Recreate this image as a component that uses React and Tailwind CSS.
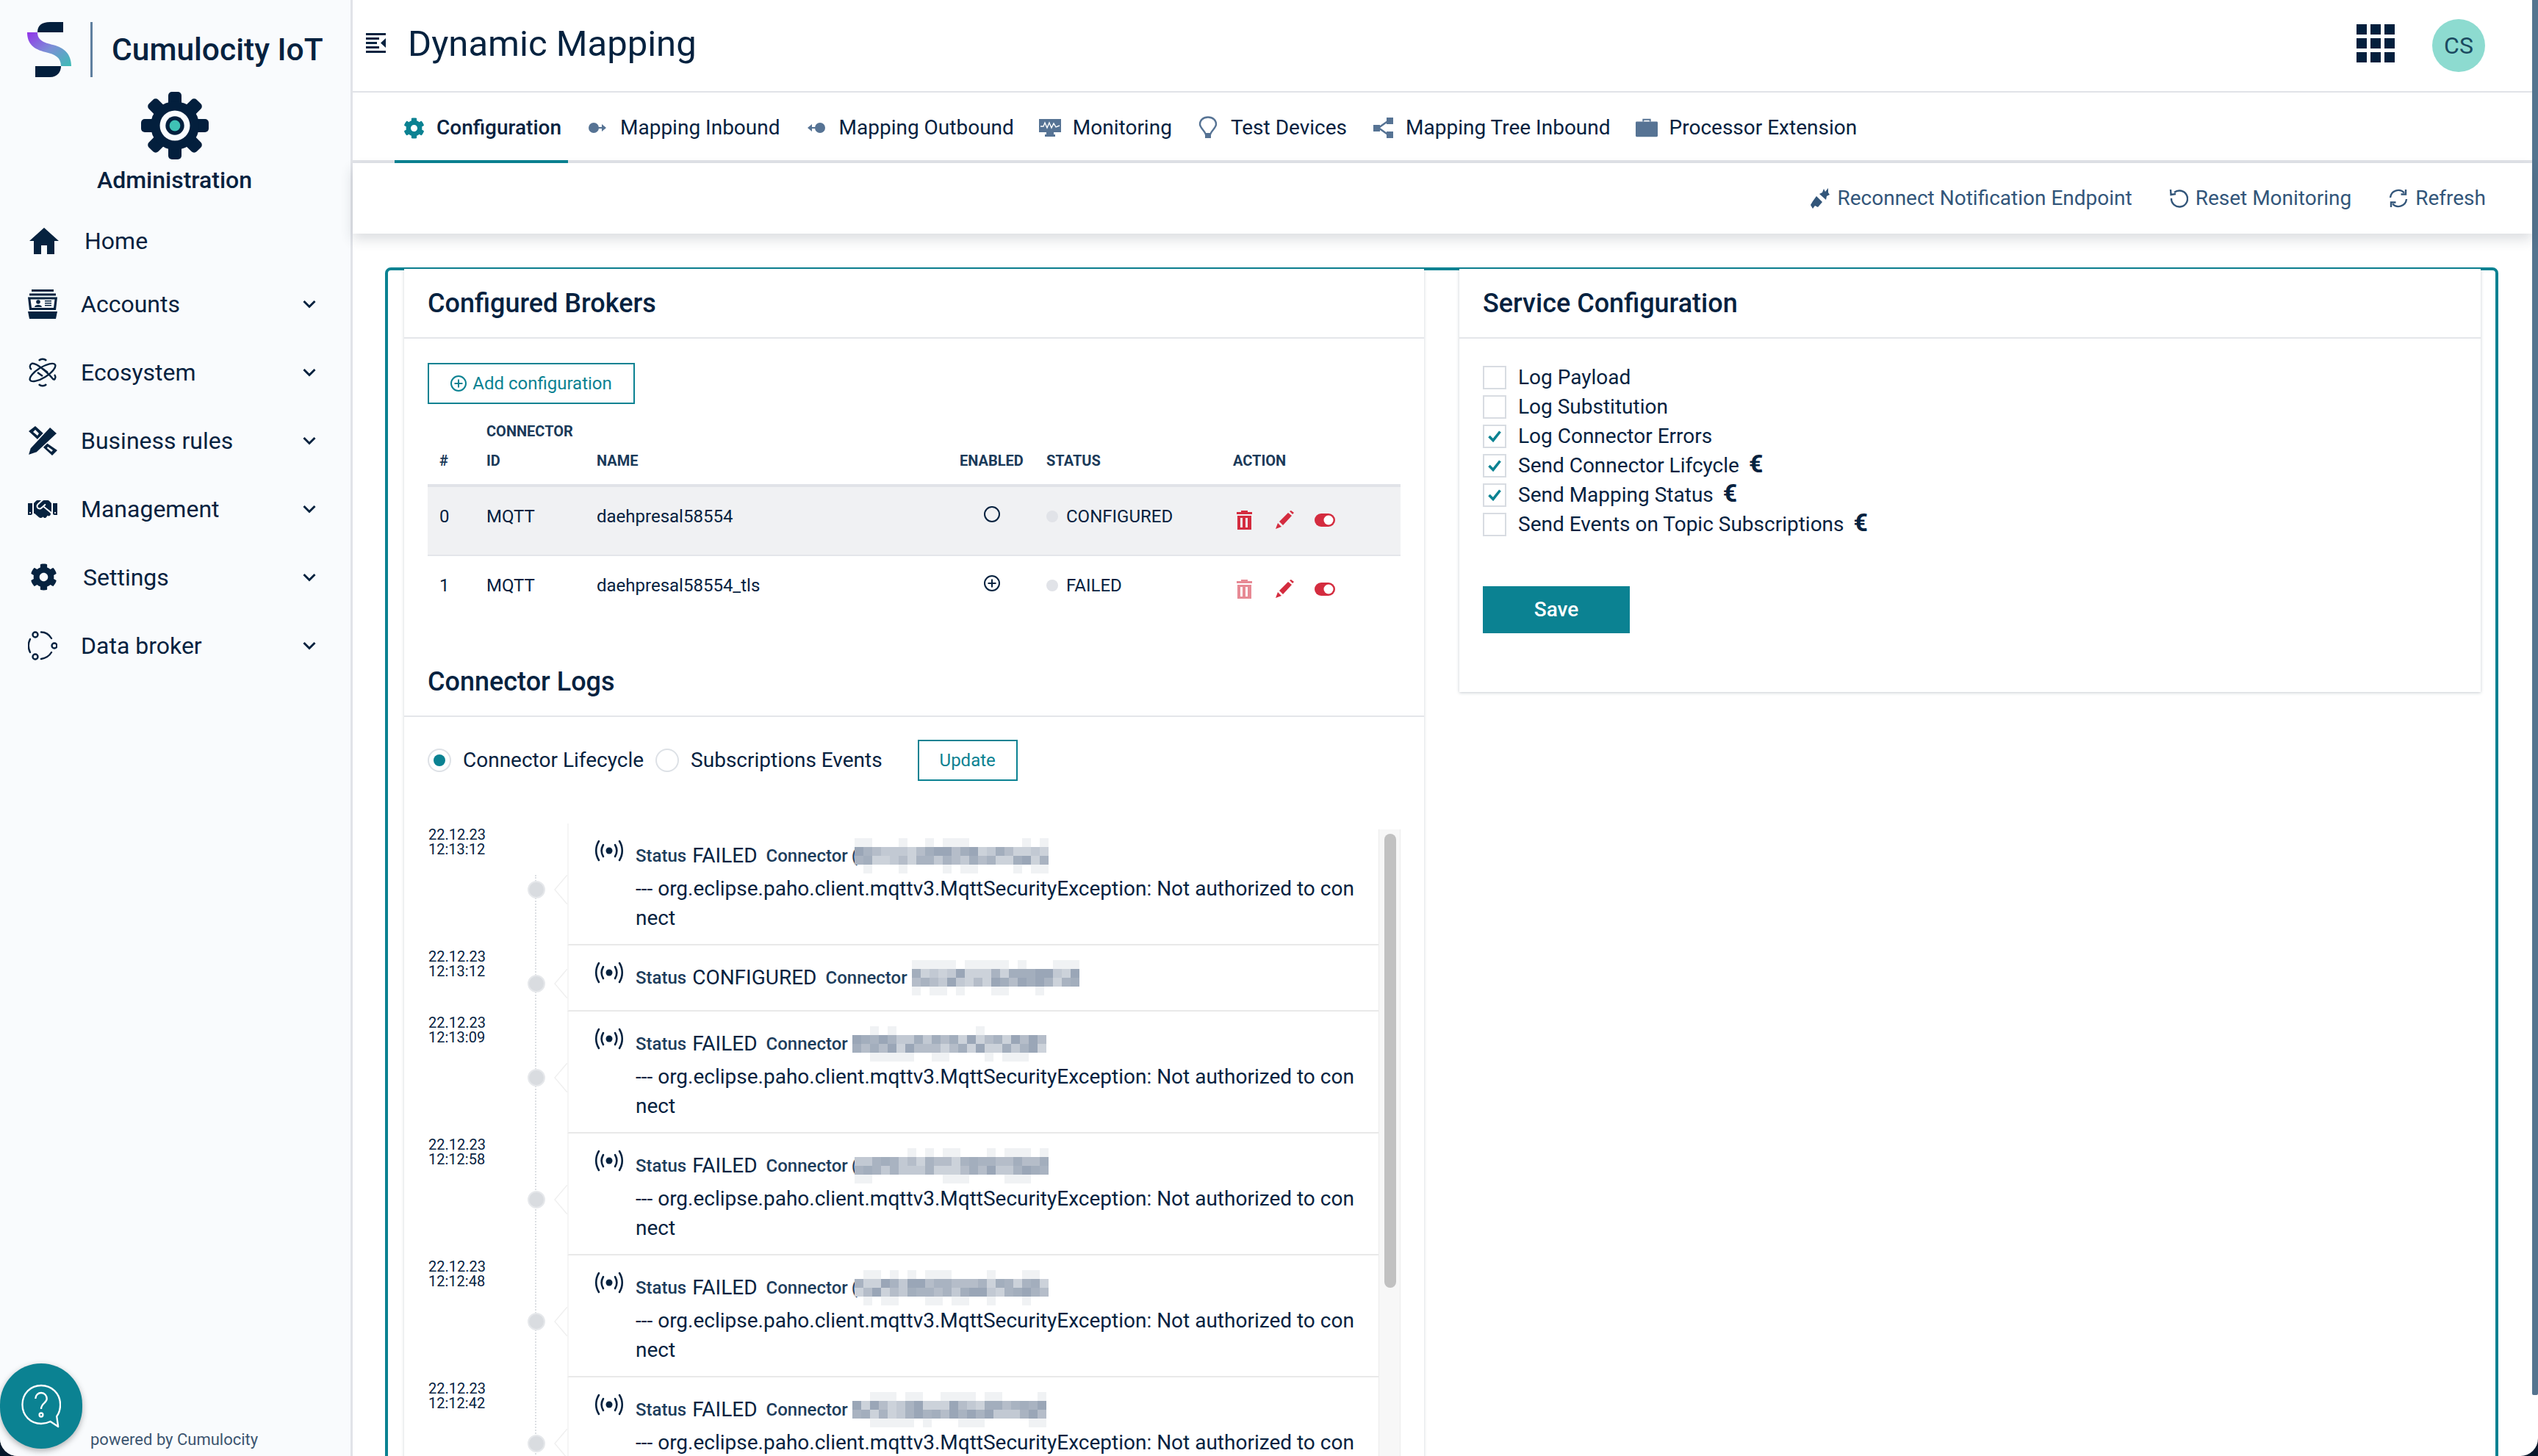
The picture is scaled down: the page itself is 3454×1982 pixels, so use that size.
import React from "react";
import { FaCog, FaHandshake } from "react-icons/fa";

const NAVY = "#06223f";
const TEAL = "#0b8292";
const ICON = "#567394";
const RED = "#d42c3f";

function Logo() {
  return (
    <svg width="60" height="75" viewBox="37 30 60 75" className="flex-none">
      <defs>
        <linearGradient id="sg" x1="0" y1="0" x2="1" y2="1">
          <stop offset="0" stopColor="#9333ea" />
          <stop offset="0.5" stopColor="#7c8fd6" />
          <stop offset="1" stopColor="#3dbdb5" />
        </linearGradient>
      </defs>
      <path d="M86 30H68Q51 30 51 44H86Z" fill="#031f3d" />
      <path d="M37 44H51C51 55 60 58 72 61C88 65 97 74 97 90H83C83 78 75 74 62 71C46 67 37 60 37 44Z" fill="url(#sg)" />
      <path d="M48 90H83C83 98 78 105 68 105H48Z" fill="#031f3d" />
    </svg>
  );
}

function BigGear() {
  const a = [0, 45, 90, 135, 180, 225, 270, 315];
  return (
    <svg width="92" height="92" viewBox="0 0 92 92">
      {a.map((r) => (
        <rect key={r} x="37" y="0" width="18" height="26" rx="5" fill="#031f3d" transform={`rotate(${r} 46 46)`} />
      ))}
      <circle cx="46" cy="46" r="33" fill="#031f3d" />
      <circle cx="46" cy="46" r="20.5" fill="#f9fbfd" />
      <circle cx="46" cy="46" r="12.7" fill="#031f3d" />
      <circle cx="46" cy="46" r="7.4" fill="#3fc1b5" />
    </svg>
  );
}

const HomeI = () => (
  <svg width="40" height="36" viewBox="0 0 40 36" fill={NAVY}><path d="M20 0L40 18H34V36H24V24H16V36H6V18H0Z" /></svg>
);
const AccountsI = () => (
  <svg width="40" height="40" viewBox="0 0 40 40" fill={NAVY}>
    <rect x="5" y="0" width="30" height="3" />
    <rect x="2" y="5.5" width="36" height="3" />
    <path fillRule="evenodd" d="M0 10.500H40L38 28H2ZM3.500 13.500L5 25H35L36.500 13.500Z" />
    <circle cx="14" cy="17" r="2.800" />
    <path d="M9 24C9 20 19 20 19 24Z" />
    <rect x="23" y="15" width="9" height="1.500" /><rect x="23" y="18" width="9" height="1.500" /><rect x="23" y="21" width="9" height="1.500" />
    <path d="M0 30H40L38 40H2Z" />
  </svg>
);
const EcoI = () => (
  <svg width="40" height="40" viewBox="0 0 40 40" fill="none" stroke={NAVY} strokeWidth="2.400">
    <ellipse cx="20" cy="20" rx="20" ry="7" transform="rotate(-32 20 20)" />
    <path d="M5 8C11 6 27 20 35 30M5 8C2 10 2 14 5 16M35 30C38 29 38 25 36 23" />
    <path d="M15 4C17 1 23 1 25 4M15 36C17 39 23 39 25 36" />
    <path d="M27 20L20 15M13 20L20 25" />
  </svg>
);
const RulesI = () => (
  <svg width="40" height="40" viewBox="0 0 40 40" fill={NAVY}>
    <path fillRule="evenodd" d="M10 0L21 10L13 18L1 7ZM10 5L7 8L13 13L15 10Z" />
    <path fillRule="evenodd" d="M24 22L40 33L33 40L21 29ZM27 28L26 30L32 35L34 33Z" />
    <path d="M0 40L3 30L30 1L40 10L12 36Z" stroke="#f9fbfd" strokeWidth="1.500" />
  </svg>
);
const BrokerI = () => (
  <svg width="40" height="40" viewBox="0 0 40 40" fill="none" stroke={NAVY} strokeWidth="2.400" strokeLinecap="round">
    <circle cx="10" cy="5" r="3.500" /><circle cx="36" cy="20" r="3.500" /><circle cx="10" cy="35" r="3.500" />
    <path d="M18 1.500C24 1.500 29 5 32 10M32 29C29 34 24 37 18 38M3 11C0 17 0 23 3 29" />
  </svg>
);
const Chevron = () => (
  <svg width="18" height="12" viewBox="0 0 18 12" fill="none" stroke={NAVY} strokeWidth="3"><path d="M1.500 2L9 9.500L16.500 2" /></svg>
);
const MenuI = () => (
  <svg width="27" height="27" viewBox="0 0 27 27" fill="#06223f">
    <rect x="0" y="0" width="27" height="3" /><rect x="0" y="6" width="18" height="3" /><rect x="0" y="12" width="15" height="3" /><rect x="0" y="18" width="18" height="3" /><rect x="0" y="24" width="27" height="3" />
    <path d="M27 7V20L20 13.500Z" />
  </svg>
);
const InI = () => (
  <svg width="24" height="16" viewBox="0 0 24 16" fill={ICON}><circle cx="7" cy="8" r="7" /><rect x="12" y="7" width="8" height="2" /><path d="M18 3L24 8L18 13Z" /></svg>
);
const OutI = () => (
  <svg width="24" height="16" viewBox="0 0 24 16" fill={ICON}><circle cx="17" cy="8" r="7" /><rect x="4" y="7" width="8" height="2" /><path d="M6 3L0 8L6 13Z" /></svg>
);
const MonI = () => (
  <svg width="30" height="24" viewBox="0 0 30 24" className="mb-[1px]">
    <rect x="0" y="0" width="30" height="18" fill={ICON} /><rect x="10" y="18" width="10" height="3" fill={ICON} /><rect x="8" y="21" width="14" height="3" fill={ICON} />
    <path d="M2 10L6 10L8 5L11 12L14 5L17 12L20 6L23 11L28 9" stroke="#fff" strokeWidth="1.400" fill="none" />
  </svg>
);
const BulbI = () => (
  <svg width="26" height="30" viewBox="0 0 26 30" className="mb-[2px]">
    <path d="M13 1.500C6 1.500 2 6 2 11C2 16 8 19 10 25H16C18 19 24 16 24 11C24 6 20 1.500 13 1.500Z" fill="none" stroke={ICON} strokeWidth="2.400" />
    <rect x="9" y="23" width="8" height="7" fill={ICON} />
  </svg>
);
const TreeI = () => (
  <svg width="27" height="28" viewBox="0 0 27 28" fill={ICON}>
    <rect x="0" y="10" width="9" height="9" /><rect x="18" y="0" width="9" height="9" /><rect x="18" y="19" width="9" height="9" />
    <path d="M7 14L21 4M7 14L21 24" stroke={ICON} strokeWidth="2.500" />
  </svg>
);
const CaseI = () => (
  <svg width="32" height="26" viewBox="0 0 32 26" fill={ICON}>
    <path d="M10 4V0H22V4H20V2H12V4Z" /><rect x="0" y="4" width="32" height="22" rx="1.500" />
  </svg>
);
const PlugI = () => (
  <svg width="26" height="28" viewBox="0 0 26 28" fill="#33567a">
    <path d="M0 23L3 18L8 11L16 19L10 26L6 24L3 28Z" />
    <path d="M12 8L16 6L18 1L20 5L24 0L24 6L26 9L22 11L21 16Z" />
  </svg>
);
const ResetI = () => (
  <svg width="26" height="26" viewBox="0 0 26 26" fill="none" stroke="#33567a" strokeWidth="2.400">
    <path d="M7 5A11 11 0 1 1 3 13" /><path d="M2 1L2.500 8L9 7" />
  </svg>
);
const RefreshI = () => (
  <svg width="28" height="26" viewBox="0 0 28 26" fill="none" stroke="#33567a" strokeWidth="2.400">
    <path d="M3 12A11 11 0 0 1 22 5.500" /><path d="M25 14A11 11 0 0 1 6 20.500" />
    <path d="M24 1V7.500H17.500M4 25V18.500H10.500" />
  </svg>
);
const Trash = ({ light }) => (
  <svg width="21" height="26" viewBox="0 0 21 26" fill={RED} opacity={light ? 0.55 : 1} fillRule="evenodd">
    <rect x="6" y="0" width="9" height="2" /><rect x="0" y="2" width="21" height="3" />
    <path d="M1 7H20V26H1ZM5 10V23H8V10ZM12 10V23H15V10Z" />
  </svg>
);
const Pencil = () => (
  <svg width="25" height="25" viewBox="0 0 25 25" fill={RED}>
    <path d="M5 15L17 3L22 7L10 20Z" /><path d="M3 17L8 22L0 25Z" /><path d="M19 1L21 0L25 3L23 5Z" />
  </svg>
);
const Toggle = () => (
  <svg width="28" height="18" viewBox="0 0 28 18"><rect width="28" height="18" rx="9" fill={RED} /><circle cx="19" cy="9" r="6.500" fill="#fff" /></svg>
);
const Signal = () => (
  <svg width="40" height="30" viewBox="0 0 40 30" fill="none" stroke={NAVY} strokeWidth="2.600" strokeLinecap="round" className="flex-none">
    <circle cx="20" cy="15" r="4.500" fill={NAVY} stroke="none" />
    <path d="M12 7C9 12 9 18 12 23M28 7C31 12 31 18 28 23" />
    <path d="M6 2C1 10 1 20 6 28M34 2C39 10 39 20 34 28" />
  </svg>
);

const menu = [
  { t: "Accounts", I: AccountsI },
  { t: "Ecosystem", I: EcoI },
  { t: "Business rules", I: RulesI },
  { t: "Management", I: () => <FaHandshake size={40} color={NAVY} /> },
  { t: "Settings", I: () => <span className="-mr-[3px] ml-[3px] flex"><FaCog size={37} color={NAVY} /></span> },
  { t: "Data broker", I: BrokerI },
];

const tabs = [
  { t: "Configuration", I: () => <FaCog size={29} color={TEAL} />, active: true },
  { t: "Mapping Inbound", I: InI },
  { t: "Mapping Outbound", I: OutI },
  { t: "Monitoring", I: MonI },
  { t: "Test Devices", I: BulbI },
  { t: "Mapping Tree Inbound", I: TreeI },
  { t: "Processor Extension", I: CaseI },
];

function Pixels({ width, seed }) {
  const cells = [];
  let s = seed;
  const rnd = () => { s = (s * 9301 + 49297) % 233280; return s / 233280; };
  const cols = Math.floor(width / 12);
  const tones = ["#9aa6b7", "#a9b3c1", "#b5bdc9", "#c2c9d3", "#ccd2da", "#a3aebd"];
  for (let r = 0; r < 4; r++) {
    for (let c = 0; c < cols; c++) {
      const core = r === 1 || r === 2;
      const fill = core ? tones[Math.floor(rnd() * tones.length)] : "#f0f2f4";
      const show = core || rnd() > 0.6;
      if (show) cells.push(<rect key={`${r}-${c}`} x={c * 12} y={r * 12} width="12" height="12" fill={fill} />);
    }
  }
  return <svg width={cols * 12} height="48" className="flex-none">{cells}</svg>;
}

const logs = [
  { d: "22.12.23", h: "12:13:12", s: "FAILED", paren: true, seed: 11 },
  { d: "22.12.23", h: "12:13:12", s: "CONFIGURED", seed: 37 },
  { d: "22.12.23", h: "12:13:09", s: "FAILED", seed: 53 },
  { d: "22.12.23", h: "12:12:58", s: "FAILED", paren: true, seed: 71 },
  { d: "22.12.23", h: "12:12:48", s: "FAILED", paren: true, seed: 97 },
  { d: "22.12.23", h: "12:12:42", s: "FAILED", seed: 131, last: true },
];

function LogRow({ l }) {
  const short = l.s === "CONFIGURED";
  return (
    <div className={`flex flex-none ${short ? "h-[90px]" : "h-[166px]"}`}>
      <div className="w-[136px] flex-none pt-[5px] pl-px text-[20px] leading-[20px]" style={{ color: NAVY }}>
        <div>{l.d}</div>
        <div>{l.h}</div>
      </div>
      <div className="mt-[14px] h-[24px] w-[24px] flex-none self-center rounded-full border-2 border-[#e6e8eb] bg-[#d9dce0]" />
      <div className="mt-[14px] flex w-[30px] flex-none justify-end self-center">
        <svg width="18" height="40" viewBox="0 0 18 40" fill="#fff" stroke="#f0f0f0" strokeWidth="1.500"><path d="M18 0L1 20L18 40" /></svg>
      </div>
      <div className="flex min-w-0 flex-1 gap-[16px] border-b-2 border-l-2 border-r-0 border-b-[#e9e9e9] border-l-[#f5f5f5] pl-[35px]">
        <div className="mt-[22px] h-[30px] flex-none"><Signal /></div>
        <div className="min-w-0 flex-1">
          <div className="mt-[24px] mb-[5px] flex h-[40px] items-center whitespace-nowrap">
            <span className="text-[24px] font-medium text-[#1d3d5c]">Status</span>
            <span className="ml-[8px] text-[28px]" style={{ color: NAVY }}>{l.s}</span>
            <span className="ml-[12px] text-[24px] font-medium text-[#1d3d5c]">Connector</span>
            {l.paren ? <span className="mr-[-4px] ml-[5px] text-[24px] text-[#1d3d5c]">(</span> : <span className="w-[6px]" />}
            <Pixels width={short ? 228 : 264} seed={l.seed} />
          </div>
          {!short && (
            <div className="text-[28px] leading-[40px] whitespace-nowrap" style={{ color: NAVY }}>
              --- org.eclipse.paho.client.mqttv3.MqttSecurityException: Not authorized to con
              {!l.last && (
                <>
                  <br />
                  nect
                </>
              )}
            </div>
          )}
        </div>
      </div>
    </div>
  );
}

function CardHeader({ children }) {
  return (
    <div className="flex h-[95px] flex-none items-center border-b-2 border-[#e4e6ea] pl-[32px] text-[36px] font-medium" style={{ color: NAVY }}>
      {children}
    </div>
  );
}

const Th = ({ className, children }) => (
  <div className={`px-[16px] text-[20px] leading-[40px] font-bold text-[#1a3a59] ${className}`}>{children}</div>
);

function TableRow({ n, name, status, enabled, lightTrash, shaded }) {
  return (
    <div className={`flex h-[94px] text-[24px] leading-[40px] ${shaded ? "border-b-2 border-[#e4e6ea] bg-[#f0f1f3]" : ""}`} style={{ color: NAVY }}>
      <div className="w-[64px] flex-none px-[16px] pt-[20px]">{n}</div>
      <div className="w-[150px] flex-none px-[16px] pt-[20px]">MQTT</div>
      <div className="w-[494px] flex-none px-[16px] pt-[20px]">{name}</div>
      <div className="flex w-[118px] flex-none justify-center pt-[26px] pl-[1px]">{enabled}</div>
      <div className="flex w-[254px] flex-none items-start gap-[11px] px-[16px] pt-[20px]">
        <span className="mt-[12px] h-[16px] w-[16px] flex-none rounded-full bg-[#e1e3e8]" />
        {status}
      </div>
      <div className={`flex flex-1 items-center pl-[21px] ${shaded ? "pb-[3px]" : "pb-[5px]"}`}>
        <span className="flex w-[53px] flex-none"><Trash light={lightTrash} /></span>
        <span className="flex w-[53px] flex-none"><Pencil /></span>
        <Toggle />
      </div>
    </div>
  );
}

const Check = ({ on }) => (
  <span className="flex h-[32px] w-[32px] flex-none items-center justify-center border-2 border-[#d8dce2] bg-white">
    {on && (
      <svg width="18" height="16" viewBox="0 0 18 16" fill="none" stroke={TEAL} strokeWidth="3.600"><path d="M1.500 8L7 13.500L16.500 1.500" /></svg>
    )}
  </span>
);

const options = [
  { t: "Log Payload" },
  { t: "Log Substitution" },
  { t: "Log Connector Errors", on: true },
  { t: "Send Connector Lifcycle", on: true, eu: true },
  { t: "Send Mapping Status", on: true, eu: true },
  { t: "Send Events on Topic Subscriptions", eu: true },
];

export default function App() {
  return (
    <div className="h-[1982px] w-[3454px] overflow-hidden bg-[#07182b] font-[Roboto,sans-serif]">
      <div className="relative flex h-full overflow-hidden rounded-b-[24px] bg-white">
        <aside className="flex h-full w-[480px] flex-none flex-col border-r-[3px] border-[#e1e3e8] bg-[#f9fbfd]" style={{ color: NAVY }}>
          <div className="mt-[30px] flex h-[75px] flex-none items-center pl-[37px]">
            <Logo />
            <div className="ml-[26px] h-[75px] w-[3px] bg-[#5f7f9f]" />
            <div className="ml-[26px] text-[42.5px] font-medium whitespace-nowrap">Cumulocity IoT</div>
          </div>
          <div className="mt-[20px] -ml-[2px] flex flex-none justify-center"><BigGear /></div>
          <div className="mt-[8px] -ml-[2px] flex-none text-center text-[32px] leading-[40px] font-medium">Administration</div>
          <nav className="mt-[17px] flex-none">
            <div className="flex h-[85px] items-center pt-[6px] pl-[40px] text-[32px]">
              <span className="flex w-[75px] flex-none"><HomeI /></span>
              Home
            </div>
            {menu.map(({ t, I }) => (
              <div key={t} className="flex h-[93px] items-center pr-[47px] pl-[38px] text-[32px]">
                <span className="flex w-[72px] flex-none"><I /></span>
                <span className={`flex-1 ${t === "Settings" ? "pl-[3px]" : ""}`}>{t}</span>
                <Chevron />
              </div>
            ))}
          </nav>
          <div className="mt-auto pb-[7px] pl-[123px] text-[22px] leading-[30px] text-[#3c5570]">powered by Cumulocity</div>
        </aside>

        <div className="flex min-w-0 flex-1 flex-col">
          <header className="flex h-[126px] flex-none items-center border-b-2 border-[#e1e3e8] pr-[64px] pl-[18px]" style={{ color: NAVY }}>
            <span className="mb-[8px] flex"><MenuI /></span>
            <h1 className="mb-[4px] ml-[30px] flex-1 text-[49px] font-normal">Dynamic Mapping</h1>
            <div className="mr-[51px] mb-[6px] grid grid-cols-3 gap-[5px]">
              {[0, 1, 2, 3, 4, 5, 6, 7, 8].map((i) => (
                <span key={i} className="h-[14px] w-[14px] bg-[#031f3d]" />
              ))}
            </div>
            <div className="flex h-[72px] w-[72px] items-center justify-center rounded-full bg-[#8ddbd0] text-[32px] text-[#1b4a60]">CS</div>
          </header>
          <div className="flex h-[96px] flex-none items-stretch gap-[14px] border-b-4 border-[#e1e3e8] pl-[57px] text-[28px]" style={{ color: NAVY }}>
            {tabs.map(({ t, I, active }) => (
              <div key={t} className={`-mb-[4px] flex items-center border-b-4 pt-[4px] pr-[9px] pl-[11px] whitespace-nowrap ${active ? "border-[#0b8292] font-medium" : "border-transparent"}`}>
                <span className="mr-[16px] flex w-[30px] flex-none justify-center"><I /></span>
                {t}
              </div>
            ))}
          </div>
          <div className="relative z-10 flex h-[96px] flex-none items-center justify-end gap-[50px] bg-white pr-[63px] text-[28px] text-[#33567a] shadow-[0_8px_16px_rgba(40,50,70,0.16)]">
            <span className="flex items-center gap-[10px]"><PlugI />Reconnect Notification Endpoint</span>
            <span className="flex items-center gap-[10px]"><ResetI />Reset Monitoring</span>
            <span className="flex items-center gap-[9px]"><RefreshI />Refresh</span>
          </div>

          <div className="min-h-0 flex-1 overflow-hidden pt-[46px] pr-[46px] pl-[44px]">
            <div className="flex h-[1700px] gap-[48px] rounded-t-[8px] border-4 border-[#0b8292] pr-[20px] pl-[22px]">
              <section className="-mt-[2px] flex w-[1388px] flex-none flex-col bg-white shadow-[0_1px_4px_rgba(30,50,70,0.22)]">
                <CardHeader>Configured Brokers</CardHeader>
                <div className="flex-none pt-[33px] pr-[32px] pl-[32px]">
                  <button className="flex h-[56px] w-[282px] items-center justify-center gap-[8px] border-2 border-[#0b8292] text-[24px] text-[#0b8292]">
                    <svg width="22" height="22" viewBox="0 0 22 22" fill="none" stroke={TEAL} strokeWidth="2"><circle cx="11" cy="11" r="10" /><path d="M11 5.500V16.500M5.500 11H16.500" /></svg>
                    Add configuration
                  </button>
                  <div className="mt-[21px] flex h-[92px] items-end border-b-4 border-[#e1e3e8] pb-[12px]">
                    <Th className="w-[64px] flex-none">#</Th>
                    <Th className="w-[150px] flex-none">CONNECTOR<br />ID</Th>
                    <Th className="w-[494px] flex-none">NAME</Th>
                    <Th className="w-[118px] flex-none">ENABLED</Th>
                    <Th className="w-[254px] flex-none">STATUS</Th>
                    <Th className="flex-1">ACTION</Th>
                  </div>
                  <TableRow
                    n="0" name="daehpresal58554" status="CONFIGURED" shaded
                    enabled={<svg width="22" height="22" viewBox="0 0 22 22" fill="none" stroke={NAVY} strokeWidth="2"><circle cx="11" cy="11" r="10" /></svg>}
                  />
                  <TableRow
                    n="1" name="daehpresal58554_tls" status="FAILED" lightTrash
                    enabled={<svg width="22" height="22" viewBox="0 0 22 22" fill="none" stroke={NAVY} strokeWidth="2"><circle cx="11" cy="11" r="10" /><path d="M11 5.500V16.500M5.500 11H16.500" /></svg>}
                  />
                </div>
                <div className="mt-[30px]"><CardHeader>Connector Logs</CardHeader></div>
                <div className="flex flex-none items-center pt-[31px] pl-[32px] text-[28px]" style={{ color: NAVY }}>
                  <span className="flex h-[32px] w-[32px] flex-none items-center justify-center rounded-full border-2 border-[#dde1e6]"><span className="h-[16px] w-[16px] rounded-full bg-[#0b8292]" /></span>
                  <span className="mr-[16px] ml-[16px]">Connector Lifecycle</span>
                  <span className="h-[32px] w-[32px] flex-none rounded-full border-2 border-[#dde1e6]" />
                  <span className="ml-[16px]">Subscriptions Events</span>
                  <button className="ml-[48px] flex h-[56px] w-[136px] items-center justify-center border-2 border-[#0b8292] text-[24px] text-[#0b8292]">Update</button>
                </div>
                <div className="mt-[58px] flex min-h-0 flex-1 overflow-hidden pr-[32px] pl-[32px]">
                  <div className="relative flex min-w-0 flex-1 flex-col">
                    <div className="absolute top-[70px] bottom-0 left-[146px] border-l-2 border-dotted border-[#dcdfe3]" />
                    {logs.map((l, i) => <div key={i} className="relative flex flex-col"><LogRow l={l} /></div>)}
                  </div>
                  <div className="mt-[8px] w-[30px] flex-none border-x border-[#ececec] bg-[#f7f7f7] pt-[6px]">
                    <div className="ml-[7px] h-[618px] w-[16px] rounded-full bg-[#c1c1c1]" />
                  </div>
                </div>
              </section>

              <section className="-mt-[2px] h-[576px] min-w-0 flex-1 bg-white shadow-[0_1px_4px_rgba(30,50,70,0.25)]">
                <CardHeader>Service Configuration</CardHeader>
                <div className="pt-[37px] pl-[32px]">
                  <div className="flex flex-col gap-[8px]">
                    {options.map((o) => (
                      <div key={o.t} className="flex h-[32px] items-center gap-[16px] text-[28px] whitespace-nowrap" style={{ color: NAVY }}>
                        <Check on={o.on} />
                        <span>{o.t}</span>
                        {o.eu && <span className="-ml-[3px] mb-[6px] text-[34px] font-bold">€</span>}
                      </div>
                    ))}
                  </div>
                  <button className="mt-[68px] h-[64px] w-[200px] bg-[#0b8292] text-[28px] font-medium text-white">Save</button>
                </div>
              </section>
            </div>
          </div>
        </div>

        <div className="h-full w-[8px] flex-none">
          <div className="h-[1899px] w-full rounded-b-[2px] bg-[#54748f]" />
        </div>

        <div className="absolute bottom-[10px] left-0 flex h-[116px] w-[112px] items-center justify-center rounded-full bg-[#0b8292] shadow-[0_3px_8px_rgba(0,0,0,0.3)]">
          <svg width="54" height="60" viewBox="0 0 56 60" fill="none" stroke="#fff" strokeWidth="2.400" preserveAspectRatio="none">
            <path d="M50 44C54 39 55 34 55 28C55 13 43 2 28 2C13 2 1.500 13 1.500 28C1.500 43 13 54 28 54C33 54 37 53 41 51L52 58Z" strokeLinejoin="round" />
            <path d="M20 20C20 15 24 12 28 12C33 12 36 16 36 20C36 26 28 26 28 34" />
            <circle cx="28" cy="42" r="2.500" />
          </svg>
        </div>
      </div>
    </div>
  );
}
